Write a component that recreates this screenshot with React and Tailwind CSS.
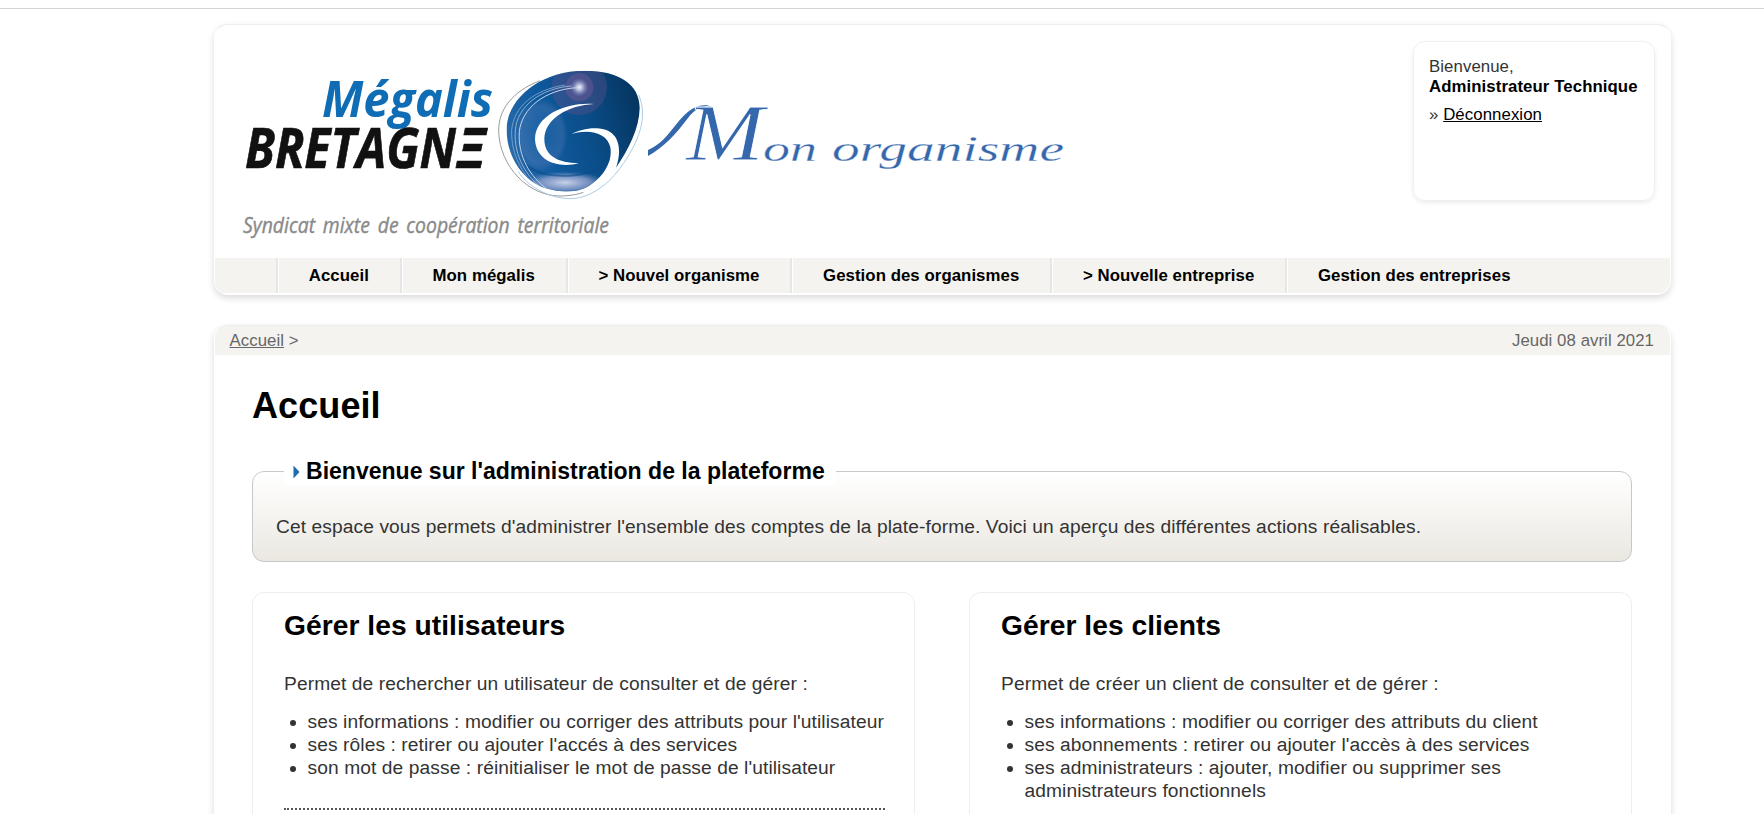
const navItems = [
  "Accueil",
  "Mon mégalis",
  "> Nouvel organisme",
  "Gestion des organismes",
  "> Nouvelle entreprise",
  "Gestion des entreprises",
];

function Logo() {
  return (
    <svg width="840" height="190" viewBox="240 60 840 190" className="block">
      <defs>
        <linearGradient id="globe" x1="0" y1="0.6" x2="1" y2="0.35">
          <stop offset="0" stopColor="#2c6cab" />
          <stop offset="0.3" stopColor="#0f5a9e" />
          <stop offset="0.6" stopColor="#0a4d88" />
          <stop offset="1" stopColor="#05335d" />
        </linearGradient>
        <radialGradient id="spark">
          <stop offset="0" stopColor="#f4f6ff" />
          <stop offset="0.35" stopColor="#b9bfe0" stopOpacity="0.9" />
          <stop offset="1" stopColor="#7a7fb8" stopOpacity="0" />
        </radialGradient>
        <radialGradient id="tint">
          <stop offset="0" stopColor="#2f7ac0" stopOpacity="0.2" />
          <stop offset="0.8" stopColor="#6b84bd" stopOpacity="0.28" />
          <stop offset="1" stopColor="#6b84bd" stopOpacity="0" />
        </radialGradient>
        <radialGradient id="glow">
          <stop offset="0" stopColor="#d5d9ee" stopOpacity="0.95" />
          <stop offset="0.6" stopColor="#9da8d2" stopOpacity="0.7" />
          <stop offset="1" stopColor="#7488bd" stopOpacity="0" />
        </radialGradient>
        <clipPath id="body">
          <path d="M50 205C52 120 145 32 285 32C390 32 450 75 449 145C448 205 415 270 378 323C398 265 388 208 320 205C290 204 265 212 245 222C300 206 352 220 361 262C368 300 345 345 305 372C275 396 225 402 165 384C95 360 48 285 50 205Z" />
        </clipPath>
      </defs>
      <text x="322" y="117" textLength="171" lengthAdjust="spacingAndGlyphs" fill="#0f6db5" className="font-['Open_Sans',sans-serif] text-[51px] font-bold italic">Mégalis</text>
      <text x="245" y="168" textLength="211" lengthAdjust="spacingAndGlyphs" fill="#111111" stroke="#111111" strokeWidth="0.7" className="font-['Open_Sans',sans-serif] text-[55px] font-bold italic">BRETAGN</text>
      <text x="457" y="168" textLength="29" lengthAdjust="spacingAndGlyphs" fill="#111111" stroke="#111111" strokeWidth="0.7" className="font-['Open_Sans',sans-serif] text-[55px] font-bold italic">Ξ</text>
      <text x="243" y="232.5" textLength="366" lengthAdjust="spacingAndGlyphs" fill="#8a8a8a" stroke="#8a8a8a" strokeWidth="0.4" className="font-['Open_Sans',sans-serif] text-[21px] italic [word-spacing:3px]">Syndicat mixte de coopération territoriale</text>
      <g transform="translate(490 60) scale(0.33333)" fill="none">
        <g clipPath="url(#body)">
          <rect x="40" y="20" width="430" height="400" fill="url(#globe)" />
          <ellipse cx="155" cy="225" rx="78" ry="108" fill="url(#tint)" />
          <ellipse cx="225" cy="368" rx="125" ry="34" fill="url(#glow)" />
          <path d="M95 300C160 362 290 362 365 290L350 318C290 358 170 362 110 325Z" fill="#0a4d8a" opacity="0.6" />
          <circle cx="268" cy="82" r="83" fill="#7a5390" opacity="0.3" />
          <circle cx="268" cy="82" r="42" fill="#93619b" opacity="0.32" />
          <circle cx="268" cy="82" r="28" fill="url(#spark)" />
          <path d="M262 83C165 88 95 145 88 215C83 290 120 350 172 388" stroke="#c3d6ea" strokeWidth="3" />
          <path d="M245 78C150 85 82 140 76 210C70 290 112 355 165 392" stroke="#a5c1df" strokeWidth="2.5" />
          <path d="M225 75C130 90 72 140 65 210C62 285 100 350 150 388" stroke="#82a8d2" strokeWidth="2.5" />
        </g>
        <path d="M312 132C240 125 135 160 135 238C138 305 205 325 266 310C205 308 162 290 163 235C166 175 235 136 312 132Z" fill="#ffffff" />
        <path d="M150 62C65 95 25 150 26 215C30 320 115 408 210 408C240 408 262 403 280 397" stroke="#9a9a9a" strokeWidth="3" />
        <path d="M446 105C475 170 448 245 390 325C345 385 290 416 240 416C170 414 110 375 85 335" stroke="#a9cbe6" strokeWidth="3" />
      </g>
      <path d="M648 150C668 142 676 119 692 109C698 105 707 104 712 107C702 105 695 109 688 118C676 134 664 147 648 156Z" fill="#3567ac" />
      <g fill="#3567ac" stroke="#ffffff" className="font-['Liberation_Serif',serif] italic">
        <text x="686" y="160" textLength="78" lengthAdjust="spacingAndGlyphs" strokeWidth="0.8" className="text-[80px]">M</text>
        <text x="763" y="161" textLength="54" lengthAdjust="spacingAndGlyphs" strokeWidth="0.3" className="text-[36px]">on</text>
        <text x="832" y="161" textLength="232" lengthAdjust="spacingAndGlyphs" strokeWidth="0.3" className="text-[36px]">organisme</text>
      </g>
    </svg>
  );
}

function Card({ title, intro, items }) {
  return (
    <section className="h-[300px] w-[663px] rounded-xl border border-[#eeeeee] pt-[15px] pr-[26px] pl-[31px]">
      <h2 className="text-[28.2px] leading-[34px] font-bold tracking-[0.04px] text-black">{title}</h2>
      <p className="mt-[30px] leading-[23px]">{intro}</p>
      <ul className="mt-[15px] list-disc pl-[23.5px] leading-[23px]">
        {items.map((item) => (
          <li key={item}>{item}</li>
        ))}
      </ul>
      <hr className="mt-[29px] w-[601px] border-0 border-t-2 border-dotted border-[#555555]" />
    </section>
  );
}

export default function App() {
  return (
    <div className="h-[814px] overflow-hidden bg-white pt-2 font-['Liberation_Sans',Arial,sans-serif] text-[16.8px] text-[#333333]">
      <div className="h-px bg-[#d5d5d5]" />
      <div className="mt-[15px] ml-[214px] w-[1457px]">
        <header className="h-[271px] overflow-hidden rounded-[14px] border border-t-[#eeeeee] border-r-transparent border-b-white border-l-white bg-white shadow-[0_3px_7px_rgba(0,0,0,0.15)]">
          <div className="flex h-[233px] justify-between">
            <div className="pt-[35px] pl-[25px]">
              <Logo />
            </div>
            <div className="mt-4 mr-[15px] h-[160px] w-[242px] shrink-0 rounded-xl border border-[#f0f0f0] pt-[15px] pl-[15px] shadow-[0_2px_4px_rgba(0,0,0,0.08)]">
              <div className="leading-5 tracking-[0.08px]">Bienvenue,</div>
              <div className="leading-5 font-bold tracking-[0.08px] whitespace-nowrap text-black">Administrateur Technique</div>
              <div className="mt-2 leading-5 tracking-[0.08px]">
                » <a className="text-black underline">Déconnexion</a>
              </div>
            </div>
          </div>
          <nav className="flex h-[35px] bg-[#f5f3ef] pl-[61px]">
            {navItems.map((label) => (
              <a
                key={label}
                className="border-l-2 border-[#e6e6e6] px-[30.8px] leading-[36px] font-bold tracking-[0.06px] whitespace-nowrap text-black shadow-[inset_1px_0_0_#fff]"
              >
                {label}
              </a>
            ))}
          </nav>
        </header>

        <main className="mt-[30px] h-[600px] overflow-hidden rounded-[14px] border border-t-[#eeeeee] border-r-transparent border-b-white border-l-white bg-white shadow-[0_3px_7px_rgba(0,0,0,0.15)]">
          <div className="flex h-[29px] justify-between bg-[#f5f3ef] pr-4 pl-[14.5px] leading-[29px] tracking-[0.06px] text-[#666666]">
            <div>
              <a className="underline">Accueil</a> &gt;
            </div>
            <div>Jeudi 08 avril 2021</div>
          </div>
          <div className="px-[37px] text-[19.2px] tracking-[0.09px]">
            <h1 className="mt-[30px] text-[36px] leading-[42px] font-bold text-black">Accueil</h1>
            <fieldset className="mt-[31px] h-[104px] w-[1380px] rounded-xl border border-[#c8c8c8] bg-linear-to-b from-white to-[#ebe8e1] pl-[23px]">
              <legend className="ml-[8px] flex h-[27px] items-center gap-[6px] bg-white pr-[11px] pl-[9px] text-[23.04px] font-bold tracking-normal whitespace-nowrap text-black">
                <svg width="7" height="14" viewBox="0 0 7 14">
                  <path d="M0.5 0.5L6.5 7L0.5 13.5Z" fill="#1f69ae" />
                </svg>
                <span className="leading-[27px]">Bienvenue sur l'administration de la plateforme</span>
              </legend>
              <p className="mt-[30px] leading-[23px]">
                Cet espace vous permets d'administrer l'ensemble des comptes de la plate-forme. Voici un aperçu des différentes actions réalisables.
              </p>
            </fieldset>
            <div className="mt-[30px] flex w-[1380px] justify-between">
              <Card
                title="Gérer les utilisateurs"
                intro="Permet de rechercher un utilisateur de consulter et de gérer :"
                items={[
                  "ses informations : modifier ou corriger des attributs pour l'utilisateur",
                  "ses rôles : retirer ou ajouter l'accés à des services",
                  "son mot de passe : réinitialiser le mot de passe de l'utilisateur",
                ]}
              />
              <Card
                title="Gérer les clients"
                intro="Permet de créer un client de consulter et de gérer :"
                items={[
                  "ses informations : modifier ou corriger des attributs du client",
                  "ses abonnements : retirer ou ajouter l'accès à des services",
                  "ses administrateurs : ajouter, modifier ou supprimer ses administrateurs fonctionnels",
                ]}
              />
            </div>
          </div>
        </main>
      </div>
    </div>
  );
}
